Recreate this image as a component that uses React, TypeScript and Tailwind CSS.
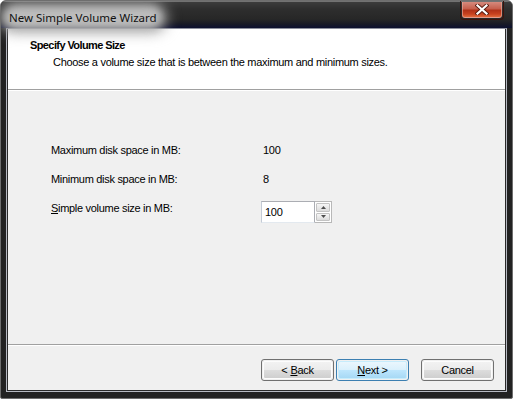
import React from 'react'

const rows = [
    { label: 'Maximum disk space in MB:', value: '100' },
    { label: 'Minimum disk space in MB:', value: '8' },
]

function WinButton({ children, primary = false, className = '' }: { children: React.ReactNode; primary?: boolean; className?: string }) {
    return (
        <div
            className={`
                w-[73px] h-[22px] rounded-[3px] border p-px
                ${primary ? 'border-[#3c7fb1]' : 'border-[#707070]'}
                ${className}
            `}
        >
            <div
                className={`
                    w-full h-full rounded-[2px] border flex items-center justify-center text-[11px] leading-[13px] tracking-[-0.3px] text-black
                    ${primary
                        ? 'border-[#c6ecfc] bg-[linear-gradient(to_bottom,#eaf6fd_0%,#d9f0fc_50%,#bee6fd_50%,#a7d9f5_100%)]'
                        : 'border-[#fcfcfc] bg-[linear-gradient(to_bottom,#f2f2f2_0%,#ebebeb_50%,#dddddd_50%,#cfcfcf_100%)]'
                    }
                `}
            >
                {children}
            </div>
        </div>
    )
}

function Spinner() {
    return (
        <div className="flex h-[22px]">
            {/* text box */}
            <div className="w-[54px] h-full border border-[#abadb3] border-l-[#c4cbd6] border-b-[#e3e9ef] bg-white flex items-center pl-[3px] text-[11px] leading-[13px] text-black">
                100
            </div>
            {/* up / down */}
            <div className="w-[17px] h-full border border-l-0 border-[#b8b8b8] bg-white p-px flex flex-col gap-px">
                {['up', 'down'].map((dir) => (
                    <div
                        key={dir}
                        className="flex-1 border border-[#c3c3c3] rounded-[1px] bg-[linear-gradient(to_bottom,#f6f6f6,#dcdcdc)] flex items-center justify-center"
                    >
                        <svg width="5" height="3" viewBox="0 0 5 3">
                            {dir === 'up'
                                ? <path d="M0 3 L2.5 0 L5 3 Z" fill="#4d4d4d" />
                                : <path d="M0 0 L2.5 3 L5 0 Z" fill="#4d4d4d" />}
                        </svg>
                    </div>
                ))}
            </div>
        </div>
    )
}

export default function App() {
    return (
        <div className="w-[513px] h-[399px] bg-white font-['Liberation_Sans',Arial,sans-serif]">
            <div className="w-full h-full rounded-t-[6px] rounded-b-[2px] border border-[#6e6e6e] bg-[#222222] flex flex-col overflow-hidden">
                {/* Title bar */}
                <div className="h-[27px] flex items-start bg-[linear-gradient(to_bottom,#a8a8a8_0px,#3c3c3c_1px,#2e2e2e_8px,#272727_18px,#181a26_23px,#0c1030_27px)]">
                    <div className="flex-1 pl-[8px] pt-[4px]">
                        <span className="relative inline-block">
                            <span className="absolute -left-[10px] -right-[10px] -top-[2px] -bottom-[3px] rounded-full bg-[#9f9f9f] blur-[7px]" />
                            <span className="absolute -left-[4px] -right-[4px] top-[2px] bottom-[2px] rounded-full bg-[#bdbdbd] blur-[4px]" />
                            <span className="relative text-[11.5px] leading-[16px] text-[#111] font-['Noto_Sans',sans-serif]">
                                New Simple Volume Wizard
                            </span>
                        </span>
                    </div>
                    {/* Close */}
                    <div className="mr-[8px] w-[44px] h-[19px] rounded-b-[4px] border border-t-0 border-[#3b130c] p-px">
                        <div className="w-full h-full rounded-b-[3px] border border-t-0 border-[#e7a597]/70 bg-[linear-gradient(to_bottom,#d68a7d_0%,#c65f4d_45%,#b13118_55%,#c8411f_80%,#e0683a_100%)] flex items-center justify-center">
                            <svg width="14" height="11" viewBox="0 0 14 11">
                                <path d="M2.5 1.5 L11.5 9.5 M11.5 1.5 L2.5 9.5" stroke="#5a1d12" strokeWidth="4" strokeLinecap="square" />
                                <path d="M2.5 1.5 L11.5 9.5 M11.5 1.5 L2.5 9.5" stroke="#ffffff" strokeWidth="2.2" strokeLinecap="square" />
                            </svg>
                        </div>
                    </div>
                </div>

                {/* Client area */}
                <div className="flex-1 px-[5px] pb-[6px] flex flex-col">
                    <div className="flex-1 border border-[#b6b9c2] border-t-[#8c8f9c] flex flex-col">
                        <div className="flex-1 border border-t-0 border-[#2a2a2a] flex flex-col">
                            {/* Header */}
                            <div className="h-[60px] bg-white pt-[10px] pl-[22px] text-black">
                                <div className="text-[11px] leading-[13px] font-bold tracking-[-0.6px]">Specify Volume Size</div>
                                <div className="mt-[4px] pl-[23px] text-[11px] leading-[13px] tracking-[-0.3px]">
                                    Choose a volume size that is between the maximum and minimum sizes.
                                </div>
                            </div>
                            <div className="h-px bg-[#a0a0a0]" />

                            {/* Body */}
                            <div className="h-[254px] bg-[#f0f0f0] border-t border-white pt-[53px] pl-[43px] text-[11px] leading-[13px] tracking-[-0.3px] text-black">
                                {rows.map((r, i) => (
                                    <div key={r.label} className={`flex ${i > 0 ? 'mt-[16px]' : ''}`}>
                                        <div className="w-[210px]">{r.label}</div>
                                        <div className="pl-[2px]">{r.value}</div>
                                    </div>
                                ))}
                                <div className="flex mt-[15px]">
                                    <div className="w-[210px] pt-px">
                                        <span className="underline underline-offset-1">S</span>imple volume size in MB:
                                    </div>
                                    <Spinner />
                                </div>
                            </div>
                            <div className="h-px bg-[#a0a0a0]" />

                            {/* Footer */}
                            <div className="flex-1 bg-[#f0f0f0] border-t border-white flex items-start justify-end pt-[13px] pr-[11px]">
                                <WinButton>
                                    &lt; <span className="underline underline-offset-1 ml-[3px]">B</span>ack
                                </WinButton>
                                <WinButton primary className="ml-[2px]">
                                    <span className="underline underline-offset-1">N</span>ext &gt;
                                </WinButton>
                                <WinButton className="ml-[12px]">Cancel</WinButton>
                            </div>
                        </div>
                    </div>
                </div>
            </div>
        </div>
    )
}
